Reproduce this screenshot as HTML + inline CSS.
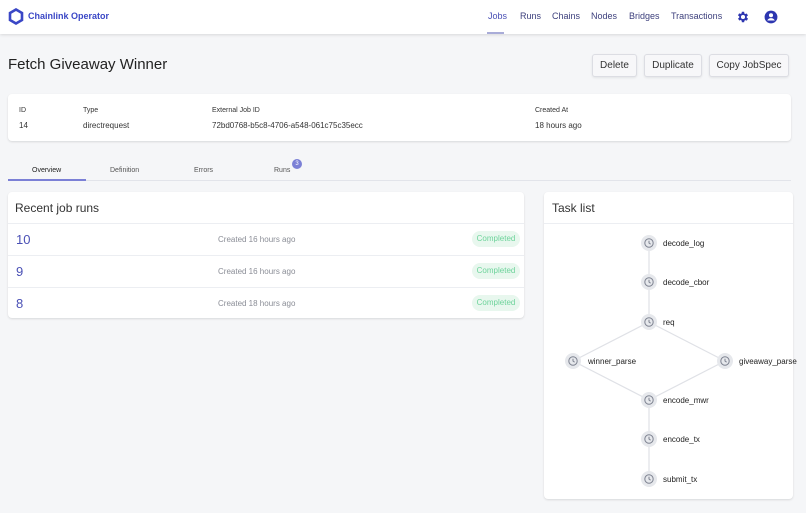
<!DOCTYPE html>
<html><head><meta charset="utf-8"><style>
*{box-sizing:border-box;margin:0;padding:0}
body{width:806px;height:513px;background:#f5f6f8;font-family:"Liberation Sans",sans-serif;position:relative;overflow:hidden;color:#222}
.abs{position:absolute}
.hdr{left:0;top:0;width:806px;height:34px;background:#fff;box-shadow:0 1px 3px rgba(0,0,0,.12)}
.nav{font-size:9px;color:#3c3f7c;top:11px}
.btn{top:54px;height:23px;border:1px solid #dcdde3;border-radius:3px;background:#f7f7f9;font-size:10px;color:#333;display:flex;align-items:center;justify-content:center;box-shadow:0 1px 2px rgba(0,0,0,.08)}
.card{background:#fff;border-radius:4px;box-shadow:0 1px 2px rgba(0,0,0,.12)}
.lbl{font-size:7px;color:#333}
.val{font-size:8px;color:#333}
.tab{font-size:7px;color:#555;top:166px}
.row{left:8px;width:516px;height:32px;border-top:1px solid #eceef2}
.num{position:absolute;left:8px;top:8px;font-size:13px;color:#4a50b5}
.cr{position:absolute;left:210px;top:11px;font-size:8px;color:#8a8d96}
.badge{position:absolute;right:4px;top:7px;width:48px;height:16px;border-radius:8px;background:#e8f7ee;color:#6cd39a;font-size:8px;text-align:center;line-height:16px}
.tl{font-size:8px;color:#222}
</style></head><body>
<div class="abs hdr"></div>
<svg class="abs" style="left:8px;top:8px" width="16" height="17" viewBox="0 0 16 17"><polygon points="8,1.5 14,5 14,12 8,15.5 2,12 2,5" fill="none" stroke="#3a47c6" stroke-width="2.6"/></svg>
<div class="abs" style="left:28px;top:11px;font-size:9px;font-weight:bold;color:#3a47c6">Chainlink Operator</div>
<div class="abs nav" style="left:488px;color:#4a50b5">Jobs</div>
<div class="abs" style="left:487px;top:32px;width:17px;height:2px;background:#a9acd8"></div>
<div class="abs nav" style="left:520px">Runs</div>
<div class="abs nav" style="left:552px">Chains</div>
<div class="abs nav" style="left:591px">Nodes</div>
<div class="abs nav" style="left:629px">Bridges</div>
<div class="abs nav" style="left:671px">Transactions</div>
<svg class="abs" style="left:736px;top:10px" width="14" height="14" viewBox="0 0 24 24"><path fill="#2d36b0" d="M19.4 13a7.5 7.5 0 000-2l2.1-1.6-2-3.5-2.5 1a7.3 7.3 0 00-1.7-1L15 3h-4l-.4 2.7a7.3 7.3 0 00-1.7 1l-2.5-1-2 3.5L6.6 11a7.5 7.5 0 000 2l-2.1 1.6 2 3.5 2.5-1a7.3 7.3 0 001.7 1L11 21h4l.4-2.7a7.3 7.3 0 001.7-1l2.5 1 2-3.5zM13 15.5a3.5 3.5 0 110-7 3.5 3.5 0 010 7z" transform="translate(-1 0)"/></svg>
<svg class="abs" style="left:764px;top:10px" width="14" height="14" viewBox="0 0 24 24"><circle cx="12" cy="12" r="11" fill="#2d36b0"/><circle cx="12" cy="9" r="3.5" fill="#fff"/><path d="M5.5 18c1.5-3 4-4 6.5-4s5 1 6.5 4" fill="#fff"/></svg>

<div class="abs" style="left:8px;top:56px;font-size:15px;color:#222">Fetch Giveaway Winner</div>
<div class="abs btn" style="left:592px;width:45px">Delete</div>
<div class="abs btn" style="left:644px;width:58px">Duplicate</div>
<div class="abs btn" style="left:709px;width:80px">Copy JobSpec</div>

<div class="abs card" style="left:8px;top:94px;width:783px;height:47px"></div>
<div class="abs lbl" style="left:19px;top:107px">ID</div>
<div class="abs val" style="left:19px;top:121px">14</div>
<div class="abs lbl" style="left:83px;top:107px">Type</div>
<div class="abs val" style="left:83px;top:121px">directrequest</div>
<div class="abs lbl" style="left:212px;top:107px">External Job ID</div>
<div class="abs val" style="left:212px;top:121px">72bd0768-b5c8-4706-a548-061c75c35ecc</div>
<div class="abs lbl" style="left:535px;top:107px">Created At</div>
<div class="abs val" style="left:535px;top:121px">18 hours ago</div>

<div class="abs tab" style="left:32px;top:167px;color:#222">Overview</div>
<div class="abs tab" style="left:110px;top:167px">Definition</div>
<div class="abs tab" style="left:194px;top:167px">Errors</div>
<div class="abs tab" style="left:274px;top:167px">Runs</div>
<div class="abs" style="left:292px;top:159px;width:10px;height:10px;border-radius:5px;background:#7b80d6;color:#fff;font-size:6px;text-align:center;line-height:10px">3</div>
<div class="abs" style="left:8px;top:180px;width:783px;height:1px;background:#e2e4ea"></div>
<div class="abs" style="left:8px;top:179px;width:78px;height:2px;background:#7b80d6"></div>

<div class="abs card" style="left:8px;top:192px;width:516px;height:126px"></div>
<div class="abs" style="left:15px;top:201px;font-size:12px;color:#333">Recent job runs</div>
<div class="abs row" style="top:223px"><span class="num">10</span><span class="cr">Created 16 hours ago</span><span class="badge">Completed</span></div>
<div class="abs row" style="top:255px"><span class="num">9</span><span class="cr">Created 16 hours ago</span><span class="badge">Completed</span></div>
<div class="abs row" style="top:287px"><span class="num">8</span><span class="cr">Created 18 hours ago</span><span class="badge">Completed</span></div>

<div class="abs card" style="left:544px;top:192px;width:249px;height:307px"></div>
<div class="abs" style="left:552px;top:201px;font-size:12px;color:#333">Task list</div>
<div class="abs" style="left:544px;top:223px;width:249px;height:1px;background:#eceef2"></div>
<svg class="abs" style="left:0;top:0" width="806" height="513">
<g stroke="#dfe1e6" stroke-width="1.2" fill="none">
<line x1="649" y1="243" x2="649" y2="322"/><line x1="649" y1="322" x2="573" y2="361"/><line x1="649" y1="322" x2="725" y2="361"/>
<line x1="573" y1="361" x2="649" y2="400"/><line x1="725" y1="361" x2="649" y2="400"/><line x1="649" y1="400" x2="649" y2="479"/>
</g>
</svg>
<svg class="abs" style="left:0;top:0" width="806" height="513">
<defs><g id="c"><circle r="8" fill="#e6e8ec"/><circle r="4.2" fill="none" stroke="#7d8290" stroke-width="1"/><path d="M0 -2.3V0L1.6 1.2" stroke="#7d8290" stroke-width="1" fill="none"/></g></defs>
<use href="#c" x="649" y="243"/><use href="#c" x="649" y="282"/><use href="#c" x="649" y="322"/>
<use href="#c" x="573" y="361"/><use href="#c" x="725" y="361"/><use href="#c" x="649" y="400"/>
<use href="#c" x="649" y="439"/><use href="#c" x="649" y="479"/>
</svg>
<div class="abs tl" style="left:663px;top:239px">decode_log</div>
<div class="abs tl" style="left:663px;top:278px">decode_cbor</div>
<div class="abs tl" style="left:663px;top:318px">req</div>
<div class="abs tl" style="left:588px;top:357px">winner_parse</div>
<div class="abs tl" style="left:739px;top:357px">giveaway_parse</div>
<div class="abs tl" style="left:663px;top:396px">encode_mwr</div>
<div class="abs tl" style="left:663px;top:435px">encode_tx</div>
<div class="abs tl" style="left:663px;top:475px">submit_tx</div>
</body></html>
